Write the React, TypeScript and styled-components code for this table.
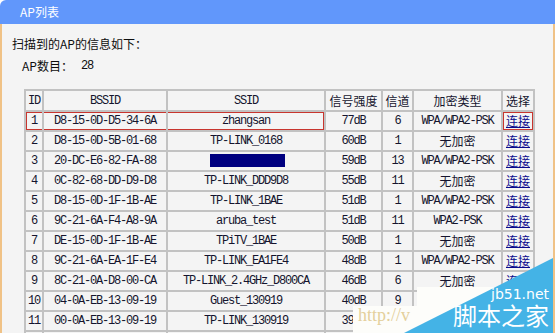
import styled, { createGlobalStyle } from "styled-components"

const GlobalStyle = createGlobalStyle`
  html, body {
    margin: 0;
    padding: 0;
    background: #ffffff;
  }

  body {
    width: 555px;
    height: 333px;
    overflow: hidden;
    font-family: "Noto Sans CJK SC", sans-serif;
  }
`

type Ap = {
  id: number
  bssid: string
  ssid: string
  rssi: string
  ch: string
  enc: string
  masked?: boolean
}

const aps: Ap[] = [
  { id: 1, bssid: "D8-15-0D-D5-34-6A", ssid: "zhangsan", rssi: "77dB", ch: "6", enc: "WPA/WPA2-PSK" },
  { id: 2, bssid: "D8-15-0D-5B-01-68", ssid: "TP-LINK_0168", rssi: "60dB", ch: "1", enc: "无加密" },
  { id: 3, bssid: "20-DC-E6-82-FA-88", ssid: "", rssi: "59dB", ch: "13", enc: "WPA/WPA2-PSK", masked: true },
  { id: 4, bssid: "0C-82-68-DD-D9-D8", ssid: "TP-LINK_DDD9D8", rssi: "55dB", ch: "11", enc: "无加密" },
  { id: 5, bssid: "D8-15-0D-1F-1B-AE", ssid: "TP-LINK_1BAE", rssi: "51dB", ch: "1", enc: "WPA/WPA2-PSK" },
  { id: 6, bssid: "9C-21-6A-F4-A8-9A", ssid: "aruba_test", rssi: "51dB", ch: "11", enc: "WPA2-PSK" },
  { id: 7, bssid: "DE-15-0D-1F-1B-AE", ssid: "TPiTV_1BAE", rssi: "50dB", ch: "1", enc: "无加密" },
  { id: 8, bssid: "9C-21-6A-EA-1F-E4", ssid: "TP-LINK_EA1FE4", rssi: "48dB", ch: "1", enc: "WPA/WPA2-PSK" },
  { id: 9, bssid: "8C-21-0A-D8-00-CA", ssid: "TP-LINK_2.4GHz_D800CA", rssi: "46dB", ch: "6", enc: "无加密" },
  { id: 10, bssid: "04-0A-EB-13-09-19", ssid: "Guest_130919", rssi: "40dB", ch: "9", enc: "WPA2-PSK" },
  { id: 11, bssid: "00-0A-EB-13-09-19", ssid: "TP-LINK_130919", rssi: "39dB", ch: "9", enc: "无加密" },
]

const isCn = (s: string) => /[\u4e00-\u9fff]/.test(s)

export default function App() {
  return (
    <>
      <GlobalStyle />
      <Panel>
        <TitleBar>AP列表</TitleBar>
        <Body>
          <Heading>扫描到的AP的信息如下：</Heading>
          <CountLine>
            <span>AP数目：</span>
            <CountValue>28</CountValue>
          </CountLine>
          <ApTable>
            <colgroup>
              <col style={{ width: 18 }} />
              <col style={{ width: 124 }} />
              <col style={{ width: 158 }} />
              <col style={{ width: 57 }} />
              <col style={{ width: 31 }} />
              <col style={{ width: 89 }} />
              <col style={{ width: 32 }} />
            </colgroup>
            <thead>
              <tr>
                <HeadCell>ID</HeadCell>
                <HeadCell>BSSID</HeadCell>
                <HeadCell>SSID</HeadCell>
                <HeadCell><Cn>信号强度</Cn></HeadCell>
                <HeadCell><Cn>信道</Cn></HeadCell>
                <HeadCell><Cn>加密类型</Cn></HeadCell>
                <HeadCell><Cn>选择</Cn></HeadCell>
              </tr>
            </thead>
            <tbody>
              {aps.map((ap) => {
                const sel = ap.id === 1
                return (
                  <tr key={ap.id}>
                    <Cell $hl={sel ? "start" : undefined}>{ap.id}</Cell>
                    <Cell $hl={sel ? "mid" : undefined}>{ap.bssid}</Cell>
                    <Cell $hl={sel ? "end" : undefined}>
                      {ap.masked ? <Mask /> : ap.ssid}
                    </Cell>
                    <Cell>{ap.rssi}</Cell>
                    <Cell>{ap.ch}</Cell>
                    <Cell>{isCn(ap.enc) ? <Cn>{ap.enc}</Cn> : ap.enc}</Cell>
                    <Cell $hl={sel ? "box" : undefined}>
                      <ConnectLink href="#">连接</ConnectLink>
                    </Cell>
                  </tr>
                )
              })}
              <tr>
                <Cell />
                <Cell />
                <Cell />
                <Cell />
                <Cell />
                <Cell />
                <Cell />
              </tr>
            </tbody>
          </ApTable>
        </Body>
        <Watermark>
          <svg width="202" height="78" viewBox="0 0 202 78">
            <rect x="64" y="32" width="136" height="46" fill="#fdfdfa" />
            <rect x="0" y="51" width="64" height="27" fill="#fdfdfa" />
            <polygon points="51,78 200,3 200,78" fill="#44b3e6" />
          </svg>
          <WmUrl>http://v</WmUrl>
          <WmSite>jb51.net</WmSite>
          <WmName>脚本之家</WmName>
        </Watermark>
      </Panel>
    </>
  )
}

const Panel = styled.div`
  position: relative;
  width: 555px;
  height: 333px;
  display: flex;
  flex-direction: column;
  overflow: hidden;
`

const TitleBar = styled.div`
  height: 24px;
  flex: none;
  padding-left: 20px;
  background: #6197fb;
  border-top-left-radius: 6px;
  color: #ffffff;
  font-size: 12px;
  line-height: 24px;
`

const Body = styled.div`
  flex: 1;
  background: #f4f4f4;
  border-left: 2px solid #f0c286;
  border-right: 2px solid #f0c286;
  padding: 12px 0 0 10px;
`

const Heading = styled.div`
  font-size: 12px;
  line-height: 16px;
  color: #0e0e0e;
`

const CountLine = styled.div`
  display: flex;
  margin: 6px 0 0 10px;
  font-size: 12px;
  line-height: 16px;
  color: #0e0e0e;
`

const CountValue = styled.span`
  margin-left: 8px;
  font-family: "Liberation Mono", monospace;
  letter-spacing: -1.2px;
`

const ApTable = styled.table`
  margin: 15px 0 0 12px;
  width: 509px;
  table-layout: fixed;
  border-collapse: collapse;
  font-family: "Liberation Mono", "Noto Sans CJK SC", monospace;
  font-size: 12px;
  letter-spacing: -1.2px;
  color: #14142e;
`

const HeadCell = styled.th`
  height: 19px;
  padding: 0;
  border: 2px solid #c2c2c2;
  font-weight: normal;
  text-align: center;
  white-space: nowrap;
`

type CellProps = {
  $hl?: "start" | "mid" | "end" | "box"
}

const Cell = styled.td<CellProps>`
  position: relative;
  height: 18px;
  padding: 0;
  border: 2px solid #c2c2c2;
  text-align: center;
  white-space: nowrap;
  overflow: hidden;

  &::after {
    content: "";
    display: ${({ $hl }) => ($hl ? "block" : "none")};
    position: absolute;
    top: -1px;
    bottom: -1px;
    left: -1px;
    right: -1px;
    border-top: 2px solid #c8352e;
    border-bottom: 2px solid #c8352e;
    border-left: ${({ $hl }) =>
      $hl === "start" || $hl === "box" ? "2px solid #c8352e" : "none"};
    border-right: ${({ $hl }) =>
      $hl === "end" || $hl === "box" ? "2px solid #c8352e" : "none"};
    pointer-events: none;
  }
`

const Cn = styled.span`
  font-family: "Noto Sans CJK SC", sans-serif;
  letter-spacing: 0;
`

const Mask = styled.span`
  display: inline-block;
  width: 75px;
  height: 13px;
  margin-left: 2px;
  vertical-align: middle;
  background: #000080;
`

const ConnectLink = styled.a`
  font-family: "Noto Sans CJK SC", sans-serif;
  letter-spacing: 0;
  color: #0a0a8c;
  text-decoration: underline;
`

const Watermark = styled.div`
  position: absolute;
  right: 0;
  bottom: 0;
  width: 202px;
  height: 78px;

  & > svg {
    display: block;
  }
`

const WmUrl = styled.span`
  position: absolute;
  left: 5px;
  top: 50px;
  font-family: "Liberation Serif", serif;
  font-size: 18px;
  color: #e4d09c;
`

const WmSite = styled.span`
  position: absolute;
  left: 138px;
  top: 31px;
  font-family: "DejaVu Sans", sans-serif;
  font-size: 14px;
  color: #ffffff;
`

const WmName = styled.span`
  position: absolute;
  left: 100px;
  top: 45px;
  font-family: "Noto Sans CJK SC", sans-serif;
  font-size: 24px;
  line-height: 30px;
  color: #ffffff;
`
